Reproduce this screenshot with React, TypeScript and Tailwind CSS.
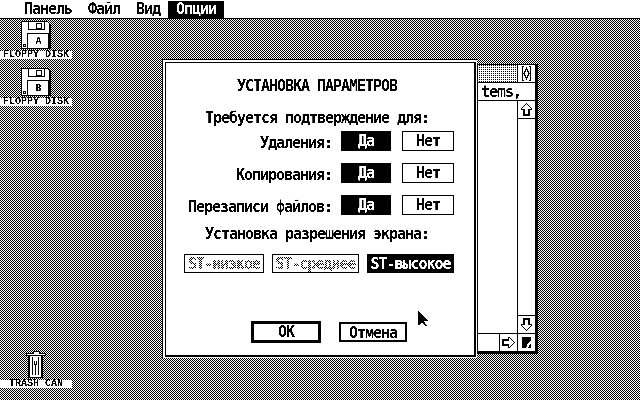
const checker =
  "bg-[linear-gradient(90deg,#fff_50%,#000_50%),linear-gradient(#fff_50%,#000_50%)] bg-[length:2px_2px] bg-blend-difference";

function Floppy({ letter }: { letter: string }) {
  return (
    <svg width="30" height="28" viewBox="0 0 30 28" shapeRendering="crispEdges">
      <path d="M.5 .5H26.5L29 3V27.5H.5Z" fill="#fff" stroke="#000" />
      <path d="M28 3H29V28H28ZM1 27H29V28H1Z" fill="#000" />
      <path d="M7.5 0V8.5H23.5V0" fill="none" stroke="#000" />
      <rect x="15.5" y="2.5" width="5" height="5" fill="none" stroke="#000" />
      <rect x="6.5" y="12.5" width="21" height="15" fill="none" stroke="#000" />
      <rect x="2.5" y="23.5" width="2" height="2" fill="none" stroke="#000" />
      <text x="17" y="22.5" textAnchor="middle" fontFamily="'Liberation Mono', monospace" fontWeight="700" fontSize="10">
        {letter}
      </text>
    </svg>
  );
}

function Trash() {
  return (
    <svg width="20" height="28" viewBox="0 0 20 28" shapeRendering="crispEdges">
      <path d="M.5 3.5H7V1H13V3.5H19.5V5.5H.5Z" fill="#fff" stroke="#000" />
      <path d="M2.5 6V27.5H16.5V6" fill="#fff" stroke="#000" />
      <path d="M2 6H4V27H2ZM15 6H17V27H15ZM6 7H7V25H6ZM12 7H13V25H12ZM8 11H9V14H10V11H11V15H10V25H9V15H8Z" fill="#000" />
    </svg>
  );
}

function DeskLabel({ children }: { children: string }) {
  return (
    <div className="flex h-2 w-[72px] items-center justify-center bg-white font-['Liberation_Mono',monospace] text-[10px] leading-none font-bold tracking-normal text-black">
      {children}
    </div>
  );
}

function Arrow({ rotate }: { rotate: string }) {
  return (
    <svg width="11" height="13" viewBox="0 0 11 13" shapeRendering="crispEdges" className={rotate}>
      <path d="M5.5 .5L10.5 5.5V6.5H8V12H3V6.5H.5V5.5Z" fill="#fff" stroke="#000" strokeWidth="1.2" />
    </svg>
  );
}

function Toggle({ label, on, wide }: { label: string; on?: boolean; wide?: boolean }) {
  return (
    <div
      className={`flex h-5 items-center justify-center border ${wide ? "w-[52px]" : "w-[50px]"} ${
        on ? "border-black bg-black text-white" : "border-black bg-white text-black"
      }`}
    >
      {label}
    </div>
  );
}

function ConfirmRow({ label }: { label: string }) {
  return (
    <div className="flex h-5 items-center justify-end pr-5">
      <span className="mt-1 mr-[9px]">{label}</span>
      <Toggle label="Да" on />
      <div className="w-[11px]" />
      <Toggle label="Нет" wide />
    </div>
  );
}

function SmallWindow() {
  return (
    <div className="absolute top-[64px] left-[477px] flex h-[290px] w-[61px] flex-col border-t border-r-[3px] border-b-[3px] border-l border-black bg-white">
      <div className="flex h-[18px] border-b border-black">
        <div className="w-[39px] bg-[conic-gradient(#000_0_25%,#fff_0_100%)] bg-[length:2px_2px]" />
        <div className="flex w-[18px] items-center justify-center border-l border-black">
          <svg width="11" height="15" viewBox="0 0 11 15" shapeRendering="crispEdges">
            <path d="M1 .5H3M8 .5H10M1 14.5H3M8 14.5H10M1.5 0V15M9.5 0V15" stroke="#000" fill="none" />
            <path d="M5.5 2.5L8 7.5L5.5 12.5L3 7.5Z" fill="#fff" stroke="#000" strokeWidth="1.5" />
          </svg>
        </div>
      </div>
      <div className="h-[18px] border-b border-black pt-px pl-[3px] whitespace-nowrap">tems,</div>
      <div className="flex min-h-0 flex-1">
        <div className="flex-1" />
        <div className="flex w-[18px] flex-col border-l border-black">
          <div className="flex h-[18px] items-center justify-center border-b border-black">
            <Arrow rotate="" />
          </div>
          <div className="flex-1" />
          <div className="flex h-[18px] items-center justify-center border-t border-black">
            <Arrow rotate="rotate-180" />
          </div>
        </div>
      </div>
      <div className="flex h-[18px] border-t border-black">
        <div className="flex-1" />
        <div className="flex w-[18px] items-center justify-center border-l border-black">
          <Arrow rotate="rotate-90" />
        </div>
        <div className="flex w-[18px] items-center justify-center border-l border-black">
          <svg width="9" height="11" viewBox="0 0 9 11" shapeRendering="crispEdges">
            <path d="M0 0H9V3L6 6L4 11H0Z" fill="#000" />
            <path d="M8 7H9V11H6Z" fill="#000" />
          </svg>
        </div>
      </div>
    </div>
  );
}

function Dialog() {
  return (
    <div className="absolute top-[59px] left-[162px] h-[299px] w-[315px] border-t border-l border-black bg-white pt-[2px] pr-px pb-px pl-[2px]">
      <div className="flex h-full flex-col border-t border-r-2 border-b-2 border-l border-black pt-[15px]">
        <div className="pl-[71px]">УСТАНОВКА ПАРАМЕТРОВ</div>
        <div className="mt-4 mb-[5px] pl-[39px]">Требуется подтверждение для:</div>
        <div className="flex flex-col gap-3">
          <ConfirmRow label="Удаления:" />
          <ConfirmRow label="Копирования:" />
          <ConfirmRow label="Перезаписи файлов:" />
        </div>
        <div className="mt-[11px] mb-3 pl-[39px]">Установка разрешения экрана:</div>
        <div className="flex h-[19px] justify-end gap-2 pr-5">
          <div className="flex w-[80px] items-center justify-center border border-black">
            <span className={`${checker} bg-clip-text text-transparent`}>ST-низкое</span>
          </div>
          <div className="flex w-[87px] items-center justify-center border border-black">
            <span className={`${checker} bg-clip-text text-transparent`}>ST-среднее</span>
          </div>
          <div className="flex w-[87px] items-center justify-center bg-black text-white">ST-высокое</div>
        </div>
        <div className="mt-12 flex items-center gap-[18px] pl-[85px]">
          <div className="flex h-[22px] w-[70px] items-center justify-center border-[3px] border-black">OK</div>
          <div className="flex h-5 w-[68px] items-center justify-center border-2 border-black pt-px">Отмена</div>
        </div>
      </div>
    </div>
  );
}

export default function App() {
  return (
    <div
      className={`relative h-[400px] w-[640px] overflow-hidden font-['DejaVu_Sans_Mono',monospace] text-[15px] leading-4 font-bold tracking-[-1.03px] text-black contrast-[6] ${checker}`}
    >
      {/* menu bar */}
      <div className="flex h-[19px] items-start border-b border-black bg-white pt-px pl-4">
        <div className="h-[17px] px-2">Панель</div>
        <div className="h-[17px] px-2">Файл</div>
        <div className="h-[17px] px-2">Вид</div>
        <div className="h-[17px] bg-black px-2 text-white">Опции</div>
      </div>

      {/* desktop icons */}
      <div className="absolute top-[21px] left-0 flex flex-col items-center gap-[2px]">
        <Floppy letter="A" />
        <DeskLabel>FLOPPY DISK</DeskLabel>
      </div>
      <div className="absolute top-[68px] left-0 flex flex-col items-center gap-[2px]">
        <Floppy letter="B" />
        <DeskLabel>FLOPPY DISK</DeskLabel>
      </div>
      <div className="absolute top-[350px] left-0 flex flex-col items-center gap-[2px]">
        <Trash />
        <DeskLabel>TRASH CAN</DeskLabel>
      </div>

      <SmallWindow />
      <Dialog />

      {/* mouse pointer */}
      <svg
        className="absolute top-[311px] left-[418px]"
        width="11"
        height="16"
        viewBox="0 0 11 16"
        shapeRendering="crispEdges"
      >
        <path d="M0 0L10 10H6L9 15H7L4 11L1 14H0Z" fill="#000" />
      </svg>
    </div>
  );
}
